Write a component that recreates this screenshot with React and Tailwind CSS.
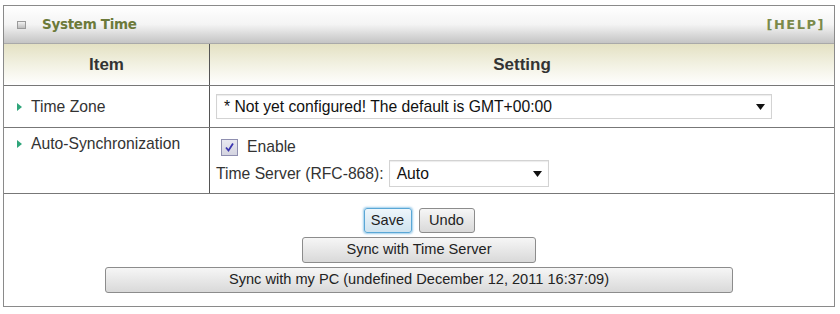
import React from "react";

function Arrow() {
  return (
    <svg width="5" height="8" viewBox="0 0 5 8" className="mr-[9px] shrink-0">
      <path d="M0 0 L5 4 L0 8 Z" fill="#2fa57a" />
    </svg>
  );
}

function SelectBox({ className, text }) {
  return (
    <div className={"flex items-center justify-between bg-white border border-[#d3d3d3] shadow-[inset_0_1px_1px_rgba(0,0,0,0.08)] " + className}>
      <span className="pl-[7px] text-[15.7px] text-[#111]">{text}</span>
      <svg width="9" height="6" viewBox="0 0 9 6" className="mr-[6px]">
        <path d="M0 0 L9 0 L4.5 6 Z" fill="#111" />
      </svg>
    </div>
  );
}

function Btn({ className, children, focus }) {
  return (
    <div
      className={
        "flex items-center justify-center rounded-[3px] border text-[14.6px] text-[#222] bg-gradient-to-b " +
        (focus
          ? "border-[#5aa7d6] shadow-[0_0_2px_1px_rgba(90,170,220,0.6)] from-[#eef6fb] to-[#cfe3ef] "
          : "border-[#8c8c8c] from-[#f6f6f6] to-[#d9d9d9] ") +
        className
      }
    >
      {children}
    </div>
  );
}

export default function App() {
  return (
    <div className="w-[840px] h-[314px] bg-white pt-[5px] pl-[3px] font-['Liberation_Sans',Arial,sans-serif]">
      <div className="w-[832px] h-[302px] border border-[#8a8a8a] flex flex-col">
        {/* title bar */}
        <div className="h-[38px] shrink-0 flex items-center justify-between bg-gradient-to-b from-white via-[#f4f4f4] to-[#c4c4c4] border-b border-[#a9a9a9]">
          <div className="flex items-center pl-[13px]">
            <div className="w-[9px] h-[8px] border border-[#9a9a9a] bg-gradient-to-b from-[#f2f2f2] to-[#bdbdbd] mr-[16px]" />
            <span className="text-[13.5px] font-bold text-[#6c7a3a] font-['DejaVu_Sans',sans-serif] tracking-[-0.3px]">System Time</span>
          </div>
          <span className="pr-[9px] text-[13px] font-bold text-[#7b8a4a] font-['DejaVu_Sans',sans-serif] tracking-[1.5px]">[HELP]</span>
        </div>
        {/* header row */}
        <div className="h-[42px] shrink-0 flex bg-gradient-to-b from-[#e4e1c3] via-[#f2f1e2] to-white border-b border-[#777]">
          <div className="w-[206px] flex items-center justify-center border-r border-[#555] text-[17px] font-bold text-[#333]">Item</div>
          <div className="flex-1 flex items-center justify-center text-[17px] font-bold text-[#333]">Setting</div>
        </div>
        {/* time zone row */}
        <div className="h-[42px] shrink-0 flex border-b border-[#777]">
          <div className="w-[206px] flex items-center pl-[13px] border-r border-[#555] text-[15.7px] text-[#333]">
            <Arrow />Time Zone
          </div>
          <div className="flex-1 flex items-center pl-[6px]">
            <SelectBox className="w-[556px] h-[25px]" text="* Not yet configured! The default is GMT+00:00" />
          </div>
        </div>
        {/* auto sync row */}
        <div className="h-[66px] shrink-0 flex border-b border-[#777]">
          <div className="w-[206px] flex items-start pt-[4px] pl-[13px] border-r border-[#555] text-[15.7px] text-[#333]">
            <span className="flex items-center h-[20px] mt-[2px]"><Arrow />Auto-Synchronization</span>
          </div>
          <div className="flex-1 flex flex-col pl-[6px] pt-[9px]">
            <div className="flex items-center h-[20px] pl-[5px]">
              <div className="w-[17px] h-[17px] border border-[#8f8fb0] bg-gradient-to-b from-[#e8e8f0] to-[#d4d4e0] flex items-center justify-center">
                <svg width="11" height="11" viewBox="0 0 11 11">
                  <path d="M2 5.5 L4.5 8.5 L9 1.5" stroke="#3a35b0" strokeWidth="1.8" fill="none" />
                </svg>
              </div>
              <span className="ml-[9px] text-[15.7px] text-[#333]">Enable</span>
            </div>
            <div className="flex items-center mt-[3px]">
              <span className="text-[15.7px] text-[#333]">Time Server (RFC-868):</span>
              <SelectBox className="ml-[5px] w-[160px] h-[27px]" text="Auto" />
            </div>
          </div>
        </div>
        {/* buttons */}
        <div className="flex-1 flex flex-col items-center pt-[14px]">
          <div className="flex gap-[7px]">
            <Btn focus className="w-[48px] h-[25px]">Save</Btn>
            <Btn className="w-[56px] h-[25px]">Undo</Btn>
          </div>
          <Btn className="mt-[4px] w-[234px] h-[26px]">Sync with Time Server</Btn>
          <Btn className="mt-[4px] w-[628px] h-[26px]">Sync with my PC (undefined December 12, 2011 16:37:09)</Btn>
        </div>
      </div>
    </div>
  );
}
